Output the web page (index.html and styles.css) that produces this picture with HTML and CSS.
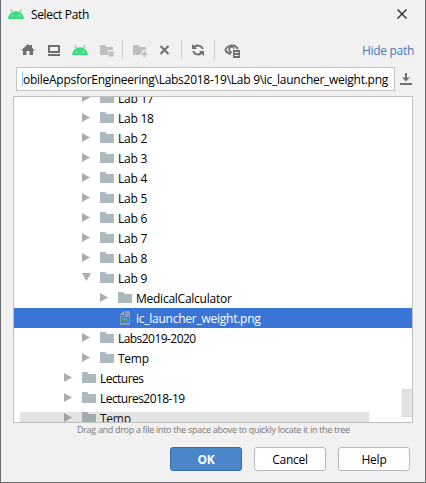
FILE: index.html
```html
<!DOCTYPE html>
<html lang="en">
<head>
<meta charset="utf-8">
<title>Select Path</title>
<link rel="stylesheet" href="styles.css">
</head>
<body>
<svg width="0" height="0" class="defs">
  <symbol id="folder" viewBox="0 0 14 11"><path d="M0 0h5l2 2h7v9H0z" fill="#adb8bf"/></symbol>
  <symbol id="closed" viewBox="0 0 9 9"><path d="M0 0l8 4.5L0 9z" fill="#adadad"/></symbol>
  <symbol id="open" viewBox="0 0 9 9"><path d="M0 0h9L4.5 8z" fill="#adadad"/></symbol>
  <symbol id="android" viewBox="0 0 16 10"><path d="M0 10C.3 7 1.700 4.600 4 3.300L2.300.5l.8-.5 1.800 2.900C6.800 2 9.200 2 11.100 2.900L12.900 0l.8.5L12 3.300C14.300 4.600 15.700 7 16 10z" fill="#3ddc84"/><circle cx="4.500" cy="7" r=".7" fill="#f1f1f1"/><circle cx="11.500" cy="7" r=".7" fill="#f1f1f1"/></symbol>
</svg>
<div class="window">
  <header class="titlebar">
    <svg class="logo" width="16" height="10"><use href="#android"/></svg>
    <span class="title">Select Path</span>
    <svg class="close" width="10" height="10" viewBox="0 0 10 10"><path d="M.5.500l9 9M9.500.500l-9 9" stroke="#222" stroke-width="1.200"/></svg>
  </header>
  <div class="toolbar">
    <svg width="387" height="22" viewBox="0 0 387 22">
      <path d="M0 10.500L7 4l2 1.900V5h2v2.700l3 2.800h-2V15H8.500v-4h-3v4H2v-4.500z" fill="#6e6e6e"/>
      <path d="M28 6h10v6H28zM27 15h12" fill="none" stroke="#6e6e6e" stroke-width="2"/>
      <path d="M79 5h5l2 2h6v3h-5v5h-8z M87.500 11.500h5v5h-5z" fill="#bfbfbf"/>
      <path d="M101.500 0v20M160.500 0v20M193.500 0v20" stroke="#cdcdcd"/>
      <path d="M112 5h5l2 2h6v3h-4v3h-2v2h-7z M122.500 11h1.800v2.200h2.200V15h-2.200v2.200h-1.800V15h-2.200v-1.800h2.200z" fill="#bfbfbf"/>
      <path d="M139.500 6l8 8M147.500 6l-8 8" stroke="#6e6e6e" stroke-width="2"/>
      <path d="M172.500 8.500a5 5 0 0 1 9.300.5M181.500 11.500a5 5 0 0 1-9.300-.5" fill="none" stroke="#6e6e6e" stroke-width="1.900"/>
      <path d="M171 4v5h5zM183 16v-5h-5z" fill="#6e6e6e"/>
      <path d="M204.200 10c3-6 10-6 12.800-1M204.200 10c1.200 2.300 3 3.500 5.800 3.900" fill="none" stroke="#6e6e6e" stroke-width="1.900"/>
      <path d="M211 12a2.600 2.600 0 1 1 2.300-3.200" fill="none" stroke="#6e6e6e" stroke-width="1.600"/>
      <path d="M212 10h7v8h-7z" fill="#6e6e6e"/><path d="M213.500 12.500h4M213.500 15.500h4" stroke="#f1f1f1"/>
    </svg>
    <svg class="bot" width="16" height="10"><use href="#android"/></svg>
    <a class="link">Hide path</a>
  </div>
  <div class="pathrow">
    <div class="field"><span class="clip"></span><span class="path">obileAppsforEngineering\Labs2018-19\Lab 9\ic_launcher_weight.png</span></div>
    <svg width="12" height="12" viewBox="0 0 12 12"><path d="M5 0h2v4.500h3L6 8.500 2 4.500h3zM0 10h12v2H0z" fill="#6e6e6e"/></svg>
  </div>
  <div class="tree">
    <div class="rows">
      <div class="row l3"><svg class="arrow"><use href="#closed"/></svg><svg class="folder"><use href="#folder"/></svg><span>Lab 17</span></div>
      <div class="row l3"><svg class="arrow"><use href="#closed"/></svg><svg class="folder"><use href="#folder"/></svg><span>Lab 18</span></div>
      <div class="row l3"><svg class="arrow"><use href="#closed"/></svg><svg class="folder"><use href="#folder"/></svg><span>Lab 2</span></div>
      <div class="row l3"><svg class="arrow"><use href="#closed"/></svg><svg class="folder"><use href="#folder"/></svg><span>Lab 3</span></div>
      <div class="row l3"><svg class="arrow"><use href="#closed"/></svg><svg class="folder"><use href="#folder"/></svg><span>Lab 4</span></div>
      <div class="row l3"><svg class="arrow"><use href="#closed"/></svg><svg class="folder"><use href="#folder"/></svg><span>Lab 5</span></div>
      <div class="row l3"><svg class="arrow"><use href="#closed"/></svg><svg class="folder"><use href="#folder"/></svg><span>Lab 6</span></div>
      <div class="row l3"><svg class="arrow"><use href="#closed"/></svg><svg class="folder"><use href="#folder"/></svg><span>Lab 7</span></div>
      <div class="row l3"><svg class="arrow"><use href="#closed"/></svg><svg class="folder"><use href="#folder"/></svg><span>Lab 8</span></div>
      <div class="row l3"><svg class="arrow"><use href="#open"/></svg><svg class="folder"><use href="#folder"/></svg><span>Lab 9</span></div>
      <div class="row l4"><svg class="arrow"><use href="#closed"/></svg><svg class="folder"><use href="#folder"/></svg><span>MedicalCalculator</span></div>
      <div class="row l4 selected"><span class="arrow"></span><svg class="file" viewBox="0 0 14 14"><path d="M7 0h5v14H2V5h5z" fill="#8d9cb0"/><path d="M2 4l4-4v4z" fill="#a6b2c2"/><path d="M3 6h8v6H3z" fill="#3875d6"/><path d="M4 7h6v4H4z" fill="#3fa5d8"/><path d="M4 11V9.500l2-1 1.500 1 1-.5L10 10v1z" fill="#4d9c55"/></svg><span>ic_launcher_weight.png</span></div>
      <div class="row l3"><svg class="arrow"><use href="#closed"/></svg><svg class="folder"><use href="#folder"/></svg><span class="dated">Labs2019-2020</span></div>
      <div class="row l3"><svg class="arrow"><use href="#closed"/></svg><svg class="folder"><use href="#folder"/></svg><span>Temp</span></div>
      <div class="row l2"><svg class="arrow"><use href="#closed"/></svg><svg class="folder"><use href="#folder"/></svg><span class="dated">Lectures</span></div>
      <div class="row l2"><svg class="arrow"><use href="#closed"/></svg><svg class="folder"><use href="#folder"/></svg><span class="dated">Lectures2018-19</span></div>
      <div class="row l2"><svg class="arrow"><use href="#closed"/></svg><svg class="folder"><use href="#folder"/></svg><span>Temp</span></div>
    </div>
    <div class="hbar"></div>
    <div class="vbar"></div>
  </div>
  <div class="hint"><span>Drag and drop a file into the space above to quickly locate it in the tree</span></div>
  <footer class="buttons">
    <div class="btn ok">OK</div>
    <div class="btn">Cancel</div>
    <div class="btn">Help</div>
  </footer>
</div>
</body>
</html>
```
FILE: styles.css
```css
* { box-sizing: border-box; }
body {
  margin: 0;
  width: 426px;
  height: 483px;
  overflow: hidden;
  font: 12px/20px "Open Sans", "Noto Sans", sans-serif;
  letter-spacing: -0.25px;
  color: #000;
  white-space: nowrap;
}
svg { display: block; flex: none; }
.defs { position: absolute; }
.window {
  height: 483px;
  background: #f1f1f1;
  border: 1px solid #6b6b6d;
  border-top: 0;
  display: flex;
  flex-direction: column;
}
.titlebar {
  height: 28px;
  padding: 0 18px 0 7px;
  display: flex;
  align-items: center;
}
.title { margin: 2px auto 0 7px; letter-spacing: -0.35px; }
.toolbar {
  height: 38px;
  padding: 12px 13px 0 20px;
  display: flex;
  position: relative;
}
.toolbar .bot { position: absolute; left: 71px; top: 17px; }
.link { position: absolute; right: 11px; top: 13px; color: #4a78c2; letter-spacing: -0.3px; }
.pathrow {
  height: 30px;
  padding: 1px 13px 0 15px;
  display: flex;
  gap: 5px;
}
.pathrow svg { margin-top: 6px; }
.field {
  width: 379px;
  height: 24px;
  padding: 2px 5px;
  background: #fff;
  border: 1px solid #c4c4c4;
  display: flex;
  align-items: center;
}
.clip { width: 1px; height: 14px; background: #7fd5f7; }
.path { letter-spacing: -0.27px; padding-top: 1px; }
.tree {
  position: relative;
  margin: 0 0 0 12px;
  width: 400px;
  height: 327px;
  background: #fff;
  border: 1px solid #c0c0c0;
  overflow: hidden;
}
.rows { margin-top: -9px; }
.row {
  height: 20px;
  line-height: 22px;
  display: flex;
}
.l2 { padding-left: 50px; }
.l3 { padding-left: 68px; }
.l4 { padding-left: 86px; }
.dated { letter-spacing: -0.55px; }
.arrow { width: 9px; height: 9px; margin: 5px 9px 0 0; }
.folder { width: 14px; height: 11px; margin: 4px 4px 0 0; }
.file { width: 14px; height: 14px; margin: 3px 4px 0 0; }
.selected { background: #3875d6; color: #fff; }
.hbar {
  position: absolute;
  left: 6px;
  bottom: 0;
  width: 349px;
  height: 10px;
  background: rgba(115, 115, 115, 0.2);
}
.vbar {
  position: absolute;
  right: 0;
  top: 292px;
  width: 10px;
  height: 28px;
  background: #e3e3e3;
  border: 1px solid #dadada;
  border-right: 0;
}
.hint {
  height: 24px;
  padding-left: 76px;
  font-size: 9px;
  line-height: 14px;
  color: #777;
  letter-spacing: -0.31px;
}
.buttons {
  display: flex;
  justify-content: flex-end;
  gap: 12px;
  padding-right: 15px;
}
.btn {
  width: 72px;
  height: 24px;
  background: #fff;
  border: 1px solid #b9b9b9;
  border-radius: 3px;
  text-align: center;
  line-height: 24px;
}
.ok {
  background: #4a86c8;
  border-color: #346dad;
  color: #fff;
  font-weight: 700;
}
```
